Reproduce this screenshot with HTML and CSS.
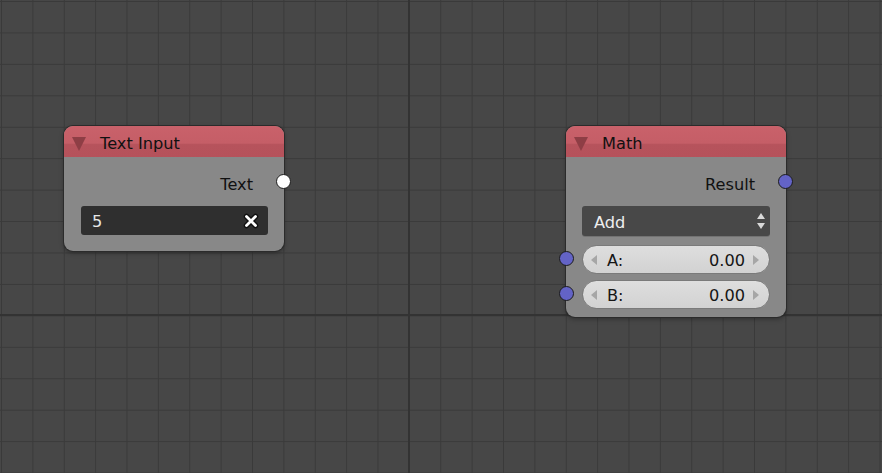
FILE: index.html
```html
<!DOCTYPE html>
<html>
<head>
<meta charset="utf-8">
<link rel="stylesheet" href="styles.css">
</head>
<body>
<div class="canvas">
  <div class="axis axis-v"></div>
  <div class="axis axis-h"></div>

  <div class="node node-text">
    <div class="node-header">
      <span class="collapse"></span>
      <span class="node-title">Text Input</span>
    </div>
    <div class="node-body">
      <div class="row row-output">
        <span class="label">Text</span>
        <span class="socket socket-out socket-white"></span>
      </div>
      <div class="text-field">
        <span class="text-value">5</span>
        <svg class="clear-icon" width="16" height="16" viewBox="0 0 16 16">
          <path d="M3.5 3.5 L12.5 12.5 M12.5 3.5 L3.5 12.5" stroke="#111" stroke-width="5.5" stroke-linecap="round"/>
          <path d="M3.5 3.5 L12.5 12.5 M12.5 3.5 L3.5 12.5" stroke="#fff" stroke-width="2.8" stroke-linecap="round"/>
        </svg>
      </div>
    </div>
  </div>

  <div class="node node-math">
    <div class="node-header">
      <span class="collapse"></span>
      <span class="node-title">Math</span>
    </div>
    <div class="node-body">
      <div class="row row-output">
        <span class="label">Result</span>
        <span class="socket socket-out socket-blue"></span>
      </div>
      <div class="dropdown">
        <span class="dropdown-value">Add</span>
        <svg class="updown" width="10" height="22" viewBox="0 0 10 22">
          <path d="M5 3 L9 9 L1 9 Z" fill="#d8d8d8"/>
          <path d="M5 19 L9 13 L1 13 Z" fill="#d8d8d8"/>
        </svg>
      </div>
      <div class="inputs">
        <div class="num-field">
          <span class="socket socket-in socket-blue"></span>
          <span class="arrow arrow-left"></span>
          <span class="num-label">A:</span>
          <span class="num-value">0.00</span>
          <span class="arrow arrow-right"></span>
        </div>
        <div class="num-field">
          <span class="socket socket-in socket-blue"></span>
          <span class="arrow arrow-left"></span>
          <span class="num-label">B:</span>
          <span class="num-value">0.00</span>
          <span class="arrow arrow-right"></span>
        </div>
      </div>
    </div>
  </div>
</div>
</body>
</html>
```

FILE: styles.css
```css
html, body {
  margin: 0;
  padding: 0;
  width: 882px;
  height: 473px;
  overflow: hidden;
  font-family: "DejaVu Sans", sans-serif;
}

.canvas {
  position: relative;
  width: 882px;
  height: 473px;
  background-color: #474747;
  background-image:
    linear-gradient(to right, #3a3a3a 0, #3a3a3a 1px, transparent 1px),
    linear-gradient(to bottom, #3a3a3a 0, #3a3a3a 1px, transparent 1px);
  background-size: 31.38px 31.45px;
  background-position: 1px 1px;
}

.axis {
  position: absolute;
  background: #333333;
}
.axis-v {
  left: 408px;
  top: 0;
  width: 2px;
  height: 473px;
}
.axis-h {
  top: 314px;
  left: 0;
  height: 2px;
  width: 882px;
}

.node {
  position: absolute;
  width: 220px;
  border-radius: 9px;
  background: #888888;
  box-shadow: 0 0 0 1px #2b2b2b, 0 2px 5px rgba(0, 0, 0, 0.35);
  color: #111;
}
.node-text {
  left: 64px;
  top: 126px;
  height: 125px;
}
.node-math {
  left: 566px;
  top: 126px;
  height: 191px;
}

.node-header {
  height: 31px;
  box-sizing: border-box;
  padding-top: 4px;
  display: flex;
  align-items: center;
  border-radius: 9px 9px 0 0;
  background: linear-gradient(to bottom, #c9616a 0, #c55e67 55%, #b6535c 60%, #b5525b 100%);
  font-size: 16.2px;
}
.collapse {
  width: 0;
  height: 0;
  margin-left: 8px;
  margin-right: 14px;
  border-left: 7px solid transparent;
  border-right: 7px solid transparent;
  border-top: 14px solid #8e3e45;
}
.node-title {
  line-height: 20px;
}

.node-body {
  display: flex;
  flex-direction: column;
  padding: 13px 16px 0 16px;
}

.row-output {
  position: relative;
  height: 26px;
  display: flex;
  align-items: center;
  justify-content: flex-end;
  padding-right: 15px;
  padding-top: 2px;
  box-sizing: border-box;
  font-size: 16.2px;
}

.socket {
  position: absolute;
  width: 13px;
  height: 13px;
  border-radius: 50%;
  border: 1px solid #1c1c1c;
}
.socket-white { background: #ffffff; }
.socket-blue { background: #6363c6; }
.socket-out {
  right: -23px;
  top: 4px;
}

.text-field {
  margin-top: 10px;
  margin-left: 1px;
  height: 29px;
  box-sizing: border-box;
  padding: 2px 9px 0 11px;
  border-radius: 3px;
  background: #2f2f2f;
  display: flex;
  align-items: center;
  justify-content: space-between;
  color: #e6e6e6;
  font-size: 16.2px;
}
.clear-icon { display: block; margin-top: -2px; }

.dropdown {
  margin-top: 10px;
  height: 30px;
  box-sizing: border-box;
  padding: 2px 4px 0 12px;
  border-radius: 3px;
  background: #484848;
  box-shadow: 0 1px 0 rgba(0,0,0,0.15);
  display: flex;
  align-items: center;
  justify-content: space-between;
  color: #eeeeee;
  font-size: 16.2px;
}
.updown { display: block; margin-top: -2px; }

.inputs {
  display: flex;
  flex-direction: column;
  gap: 6px;
  margin-top: 9px;
}
.num-field {
  position: relative;
  height: 29px;
  box-sizing: border-box;
  padding: 2px 10px 0 8px;
  border-radius: 15px;
  border: 1px solid #7a7a7a;
  background: linear-gradient(to bottom, #dedede, #d2d2d2);
  display: flex;
  align-items: center;
  font-size: 16.2px;
  color: #151515;
}
.num-field .socket-in {
  left: -24px;
  top: 5px;
}
.arrow {
  width: 0;
  height: 0;
  margin-top: -2px;
  border-top: 5px solid transparent;
  border-bottom: 5px solid transparent;
}
.arrow-left {
  border-right: 6px solid #a6a6a6;
  margin-right: 10px;
}
.arrow-right {
  border-left: 6px solid #a6a6a6;
  margin-left: 8px;
}
.num-label { flex: 1; }
```
